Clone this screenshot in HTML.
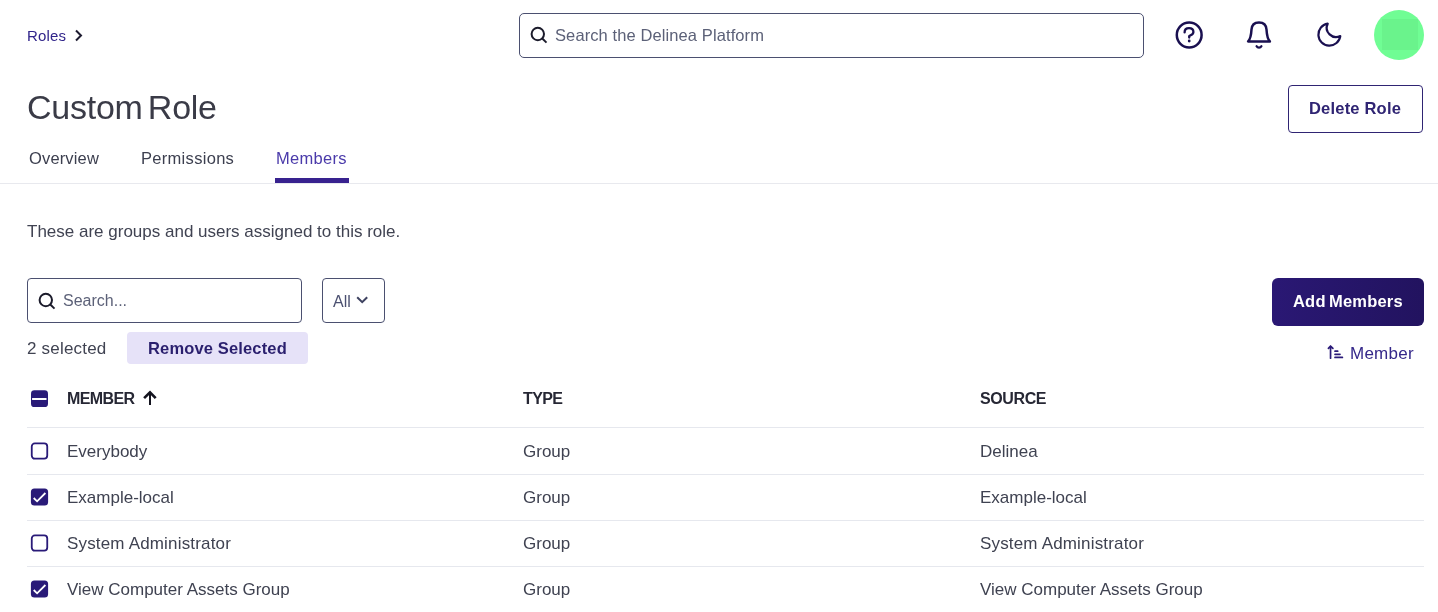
<!DOCTYPE html>
<html>
<head>
<meta charset="utf-8">
<style>
html,body{margin:0;padding:0;background:#ffffff;width:1438px;height:612px;overflow:hidden;position:relative;}
body{font-family:"Liberation Sans",sans-serif;will-change:transform;}
.a{position:absolute;}
.t{position:absolute;white-space:nowrap;line-height:20px;font-size:16px;}
.box{position:absolute;box-sizing:border-box;}
.line{position:absolute;left:27px;width:1397px;height:1px;background:#e6e8ee;}
.cb{position:absolute;left:31px;width:17px;height:17px;box-sizing:border-box;border-radius:3px;}
.cb.off{border:2px solid #2d1d7c;background:#fff;}
.cb.on{background:#2a1a7a;}
.rt{position:absolute;white-space:nowrap;line-height:20px;font-size:17px;color:#3f4251;}
.ht{position:absolute;white-space:nowrap;line-height:20px;font-size:16px;font-weight:bold;color:#262734;letter-spacing:-0.6px;}
</style>
</head>
<body>
<!-- breadcrumb -->
<div class="t" style="left:27px;top:26px;font-size:15px;color:#30248a;letter-spacing:0.15px;">Roles</div>
<svg class="a" style="left:72px;top:27px" width="14" height="16" viewBox="0 0 14 16"><path d="M4 3.5 L9 8.5 L4 13.5" fill="none" stroke="#1d1b30" stroke-width="2"/></svg>

<!-- top search -->
<div class="box" style="left:519px;top:13px;width:625px;height:45px;border:1px solid #4b5070;border-radius:5px;"></div>
<svg class="a" style="left:529px;top:25px" width="20" height="20" viewBox="0 0 20 20"><circle cx="8.8" cy="9" r="6.2" fill="none" stroke="#1b1b2b" stroke-width="2"/><path d="M13.3 13.5 L17.5 17.6" stroke="#1b1b2b" stroke-width="2"/></svg>
<div class="t" style="left:555px;top:25px;font-size:16.5px;color:#5c6178;letter-spacing:0.1px;">Search the Delinea Platform</div>

<!-- header icons -->
<svg class="a" style="left:1174px;top:20px" width="30" height="30" viewBox="0 0 30 30">
<circle cx="15.2" cy="15" r="12.4" fill="none" stroke="#1a1050" stroke-width="2.5"/>
<path d="M10.6 12.4 C10.6 9.6 12.6 8.2 15 8.2 C17.6 8.2 19.4 9.8 19.4 12 C19.4 14.6 16.8 15 15.2 16.2 L15.2 17.6" fill="none" stroke="#1a1050" stroke-width="2.3" stroke-linecap="round"/>
<circle cx="15.2" cy="21" r="1.4" fill="#1a1050"/>
</svg>
<svg class="a" style="left:1244px;top:19px" width="30" height="32" viewBox="0 0 30 32">
<path d="M4.1 22.4 L25.9 22.4 C23.2 19.8 22.8 15.5 22.5 10.5 C22.2 6 19.5 3.4 15 3.4 C10.5 3.4 7.8 6 7.5 10.5 C7.2 15.5 6.8 19.8 4.1 22.4 Z" fill="none" stroke="#1a1050" stroke-width="2.5" stroke-linejoin="round"/>
<path d="M12.6 27.2 C13.6 29 16.4 29 17.4 27.2" fill="none" stroke="#1a1050" stroke-width="2.3" stroke-linecap="round"/>
</svg>
<svg class="a" style="left:1314px;top:20px" width="30" height="30" viewBox="0 0 30 30">
<path d="M13.7 3.7 A11 11 0 1 0 26.3 16 A9.3 9.3 0 0 1 13.7 3.7 Z" fill="none" stroke="#1a1050" stroke-width="2.2" stroke-linejoin="round"/>
</svg>
<div class="box" style="left:1374px;top:10px;width:50px;height:50px;border-radius:50%;background:#70fd94;overflow:hidden;">
  <div class="box" style="left:8px;top:9px;width:36px;height:31px;background:#6af38c;"></div>
</div>

<!-- title -->
<div class="t" style="left:27px;top:87px;font-size:34px;line-height:40px;color:#3a3b47;letter-spacing:-0.25px;word-spacing:-4px;">Custom Role</div>
<div class="box" style="left:1288px;top:85px;width:135px;height:48px;border:1px solid #2f2473;border-radius:4px;"></div>
<div class="t" style="left:1309px;top:98px;font-size:16.5px;font-weight:bold;color:#2f2473;letter-spacing:0.2px;">Delete Role</div>

<!-- tabs -->
<div class="t" style="left:29px;top:148px;font-size:16.5px;color:#3c3f4f;letter-spacing:0.15px;">Overview</div>
<div class="t" style="left:141px;top:148px;font-size:16.5px;color:#3c3f4f;letter-spacing:0.3px;">Permissions</div>
<div class="t" style="left:276px;top:148px;font-size:16.5px;color:#4a3aaa;letter-spacing:0.3px;">Members</div>
<div class="a" style="left:0;top:183px;width:1438px;height:1px;background:#e8e9ee;"></div>
<div class="a" style="left:275px;top:178px;width:74px;height:5px;background:#38228f;"></div>

<!-- description -->
<div class="t" style="left:27px;top:222px;font-size:17px;color:#404352;">These are groups and users assigned to this role.</div>

<!-- search members -->
<div class="box" style="left:27px;top:278px;width:275px;height:45px;border:1px solid #4b5070;border-radius:4px;"></div>
<svg class="a" style="left:37px;top:291px" width="20" height="20" viewBox="0 0 20 20"><circle cx="8.8" cy="9" r="6.2" fill="none" stroke="#1b1b2b" stroke-width="2"/><path d="M13.3 13.5 L17.5 17.6" stroke="#1b1b2b" stroke-width="2"/></svg>
<div class="t" style="left:63px;top:291px;font-size:16px;color:#5c6178;">Search...</div>

<div class="box" style="left:322px;top:278px;width:63px;height:45px;border:1px solid #4b5070;border-radius:4px;"></div>
<div class="t" style="left:333px;top:292px;font-size:16px;color:#4b5070;">All</div>
<svg class="a" style="left:355px;top:294px" width="14" height="12" viewBox="0 0 14 12"><path d="M2.2 3.2 L7.2 8.2 L12.2 3.2" fill="none" stroke="#3e4260" stroke-width="2"/></svg>

<div class="t" style="left:27px;top:339px;font-size:17px;color:#404352;letter-spacing:0.2px;">2 selected</div>
<div class="box" style="left:127px;top:332px;width:181px;height:32px;background:#e6e2f8;border-radius:4px;"></div>
<div class="t" style="left:148px;top:338px;font-size:16.5px;font-weight:bold;color:#2a1f6e;letter-spacing:0.15px;">Remove Selected</div>

<div class="box" style="left:1272px;top:278px;width:152px;height:48px;border-radius:6px;background:linear-gradient(90deg,#2a1874,#22135f);"></div>
<div class="t" style="left:1293px;top:291px;font-size:16.5px;font-weight:bold;color:#ffffff;letter-spacing:0.2px;word-spacing:-1.5px;">Add Members</div>

<svg class="a" style="left:1326px;top:343px" width="20" height="18" viewBox="0 0 20 18">
<path d="M4.55 15.2 L4.55 3 M2.4 5.3 L4.55 3 L6.9 5.3" fill="none" stroke="#2a1a78" stroke-width="1.7" stroke-linecap="round" stroke-linejoin="round"/>
<path d="M9 8.2 L11.7 8.2 M9 11.3 L14 11.3 M9 14.4 L16.4 14.4" fill="none" stroke="#2a1a78" stroke-width="1.7" stroke-linecap="round"/>
</svg>
<div class="t" style="left:1350px;top:344px;font-size:17px;color:#35288a;letter-spacing:0.25px;">Member</div>

<!-- table header -->
<svg class="a" style="left:30px;top:389px" width="20" height="20" viewBox="0 0 20 20"><rect x="1" y="1.3" width="17" height="16.8" rx="3.4" fill="#291a78"/><rect x="2.1" y="9" width="14.4" height="2" fill="#fff"/></svg>
<div class="ht" style="left:67px;top:389px;">MEMBER</div>
<svg class="a" style="left:141px;top:388px" width="18" height="19" viewBox="0 0 18 19"><path d="M9 17 L9 5" fill="none" stroke="#14141f" stroke-width="2"/><path d="M3.1 10.2 L9 4.3 L14.7 10.2" fill="none" stroke="#14141f" stroke-width="2.6"/></svg>
<div class="ht" style="left:523px;top:389px;">TYPE</div>
<div class="ht" style="left:980px;top:389px;letter-spacing:-0.4px;">SOURCE</div>
<div class="line" style="top:427px;"></div>

<!-- rows -->
<svg class="a" style="left:30px;top:441px" width="20" height="20" viewBox="0 0 20 20"><rect x="1.75" y="2.4" width="15.5" height="15.3" rx="3.1" fill="none" stroke="#291a78" stroke-width="1.8"/></svg>
<div class="rt" style="left:67px;top:442px;">Everybody</div>
<div class="rt" style="left:523px;top:442px;">Group</div>
<div class="rt" style="left:980px;top:442px;">Delinea</div>
<div class="line" style="top:474px;"></div>

<svg class="a" style="left:30px;top:487px" width="20" height="20" viewBox="0 0 20 20"><rect x="0.9" y="1.5" width="17.2" height="17.1" rx="3.5" fill="#291a78"/><path d="M3.7 11 L7.1 14.3 L15.4 6" fill="none" stroke="#fff" stroke-width="1.8"/></svg>
<div class="rt" style="left:67px;top:488px;">Example-local</div>
<div class="rt" style="left:523px;top:488px;">Group</div>
<div class="rt" style="left:980px;top:488px;">Example-local</div>
<div class="line" style="top:520px;"></div>

<svg class="a" style="left:30px;top:533px" width="20" height="20" viewBox="0 0 20 20"><rect x="1.75" y="2.4" width="15.5" height="15.3" rx="3.1" fill="none" stroke="#291a78" stroke-width="1.8"/></svg>
<div class="rt" style="left:67px;top:534px;letter-spacing:0.17px;">System Administrator</div>
<div class="rt" style="left:523px;top:534px;">Group</div>
<div class="rt" style="left:980px;top:534px;letter-spacing:0.17px;">System Administrator</div>
<div class="line" style="top:566px;"></div>

<svg class="a" style="left:30px;top:579px" width="20" height="20" viewBox="0 0 20 20"><rect x="0.9" y="1.5" width="17.2" height="17.1" rx="3.5" fill="#291a78"/><path d="M3.7 11 L7.1 14.3 L15.4 6" fill="none" stroke="#fff" stroke-width="1.8"/></svg>
<div class="rt" style="left:67px;top:580px;">View Computer Assets Group</div>
<div class="rt" style="left:523px;top:580px;">Group</div>
<div class="rt" style="left:980px;top:580px;">View Computer Assets Group</div>
</body>
</html>
